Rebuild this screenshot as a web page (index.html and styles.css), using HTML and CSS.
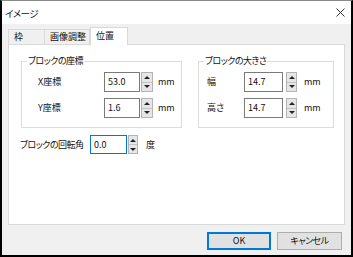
FILE: index.html
```html
<!DOCTYPE html>
<html lang="ja">
<head>
<meta charset="utf-8">
<link rel="stylesheet" href="styles.css">
</head>
<body>
<div class="window">
  <div class="titlebar">
    <span class="title kana">イメージ</span>
    <svg class="close" width="9" height="9" viewBox="0 0 9 9"><path d="M0.5 0.5L8.5 8.5M8.5 0.5L0.5 8.5" stroke="#333" stroke-width="1" fill="none"/></svg>
  </div>
  <div class="main">
    <div class="tabs">
      <div class="tab t1">枠</div>
      <div class="tab t2">画像調整</div>
      <div class="tab t3 active">位置</div>
    </div>
    <div class="panel">
      <div class="groups">
        <div class="group g1">
          <span class="legend kana">ブロックの座標</span>
          <div class="row">
            <span class="lbl">X座標</span>
            <span class="spin"><span class="box">53.0</span><span class="arrows"><span class="up"></span><span class="down"></span></span></span>
            <span class="unit">mm</span>
          </div>
          <div class="row">
            <span class="lbl">Y座標</span>
            <span class="spin"><span class="box">1.6</span><span class="arrows"><span class="up"></span><span class="down"></span></span></span>
            <span class="unit">mm</span>
          </div>
        </div>
        <div class="group g2">
          <span class="legend kana">ブロックの大きさ</span>
          <div class="row">
            <span class="lbl">幅</span>
            <span class="spin"><span class="box">14.7</span><span class="arrows"><span class="up"></span><span class="down"></span></span></span>
            <span class="unit">mm</span>
          </div>
          <div class="row">
            <span class="lbl">高さ</span>
            <span class="spin"><span class="box">14.7</span><span class="arrows"><span class="up"></span><span class="down"></span></span></span>
            <span class="unit">mm</span>
          </div>
        </div>
      </div>
      <div class="rot-row">
        <span class="lbl kana">ブロックの回転角</span>
        <span class="spin focus"><span class="box">0.0</span><span class="arrows"><span class="up"></span><span class="down"></span></span></span>
        <span class="unit">度</span>
      </div>
    </div>
    <div class="buttons">
      <div class="btn ok">OK</div>
      <div class="btn cancel kana">キャンセル</div>
    </div>
  </div>
</div>
</body>
</html>
```
FILE: styles.css
```css
* { box-sizing: border-box; }
html, body { margin: 0; padding: 0; }
body {
  width: 353px;
  height: 257px;
  font-family: "Noto Sans CJK JP", "Noto Sans", sans-serif;
  font-feature-settings: "palt";
  font-size: 9px;
  color: #111;
  background: #fff;
}
.kana { letter-spacing: -0.5px; }
.window {
  width: 353px;
  height: 257px;
  border-left: 2px solid #000;
  border-right: 2px solid #000;
  border-bottom: 2px solid #000;
  border-top: 1px solid #8a8a8a;
  background: #f0f0f0;
  display: flex;
  flex-direction: column;
}
.titlebar {
  height: 23px;
  background: #fff;
  display: flex;
  align-items: center;
  justify-content: space-between;
  padding: 0 6px 0 3px;
  flex: none;
}
.title { font-size: 9.5px; line-height: 12px; }
.close { display: block; margin-top: -1px; }
.main {
  flex: 1;
  padding: 3px 5px 0 6px;
  display: flex;
  flex-direction: column;
}
.tabs {
  display: flex;
  align-items: flex-end;
  height: 17px;
  position: relative;
  z-index: 1;
}
.tab {
  height: 15px;
  border: 1px solid #d9d9d9;
  border-bottom: none;
  background: #f0f0f0;
  display: flex;
  align-items: center;
  justify-content: flex-start;
  padding-left: 5px;
  line-height: 12px;
}
.t1 { width: 37px; }
.t2 { width: 45px; border-left: none; }
.t3 { width: 38px; }
.tab.active {
  height: 18px;
  margin-bottom: -1px;
  background: #fff;
  border-left: 1px solid #d9d9d9;
  padding-left: 5px;
  padding-bottom: 2px;
}
.panel {
  width: 337px;
  height: 181px;
  background: #fff;
  border: 1px solid #d9d9d9;
  padding: 16px 0 0 12px;
}
.groups { display: flex; gap: 16px; }
.group {
  position: relative;
  border: 1px solid #dcdcdc;
  padding: 10px 0 9px;
  display: flex;
  flex-direction: column;
  gap: 6px;
  height: 67px;
}
.g1 { width: 161px; padding-left: 16px; }
.g2 { width: 136px; padding-left: 8px; }
.legend {
  position: absolute;
  top: -7px;
  left: 5px;
  background: #fff;
  padding: 0 1px;
  line-height: 12px;
}
.row { display: flex; align-items: center; height: 20px; }
.lbl { line-height: 12px; }
.g1 .lbl { width: 66px; }
.g2 .lbl { width: 37px; }
.spin { display: flex; height: 20px; }
.box {
  border: 1px solid #7a7a7a;
  background: #fff;
  padding-left: 3px;
  display: flex;
  align-items: center;
  line-height: 12px;
}
.g1 .box { width: 36px; }
.g2 .box { width: 39px; }
.arrows {
  display: flex;
  flex-direction: column;
  background: #e6e6e6;
  border: 1px solid #b4b4b4;
  margin-left: 1px;
  width: 12px;
}
.g2 .arrows { margin-left: 3px; width: 11px; }
.up, .down {
  flex: 1;
  display: flex;
  align-items: center;
  justify-content: center;
}
.up { border-bottom: 1px solid #c4c4c4; }
.up::before {
  content: "";
  border-left: 3px solid transparent;
  border-right: 3px solid transparent;
  border-bottom: 3px solid #222;
}
.down::before {
  content: "";
  border-left: 3px solid transparent;
  border-right: 3px solid transparent;
  border-top: 3px solid #222;
}
.unit { line-height: 12px; margin-left: 5px; }
.g2 .unit { margin-left: 7px; }
.rot-row {
  display: flex;
  align-items: center;
  margin-top: 7px;
  height: 19px;
}
.rot-row .lbl { width: 70px; margin-left: -1px; }
.rot-row .spin { height: 19px; }
.rot-row .box { width: 37px; border-color: #0078d7; }
.rot-row .arrows { width: 10px; margin-left: 1px; }
.rot-row .unit { margin-left: 8px; }
.buttons {
  display: flex;
  justify-content: flex-end;
  gap: 6px;
  padding: 7px 4px 0 0;
}
.btn {
  height: 18px;
  background: #e1e1e1;
  border: 1px solid #adadad;
  display: flex;
  align-items: center;
  justify-content: center;
  line-height: 12px;
}
.ok { width: 64px; border: 2px solid #0078d7; }
.cancel { width: 65px; }
```
